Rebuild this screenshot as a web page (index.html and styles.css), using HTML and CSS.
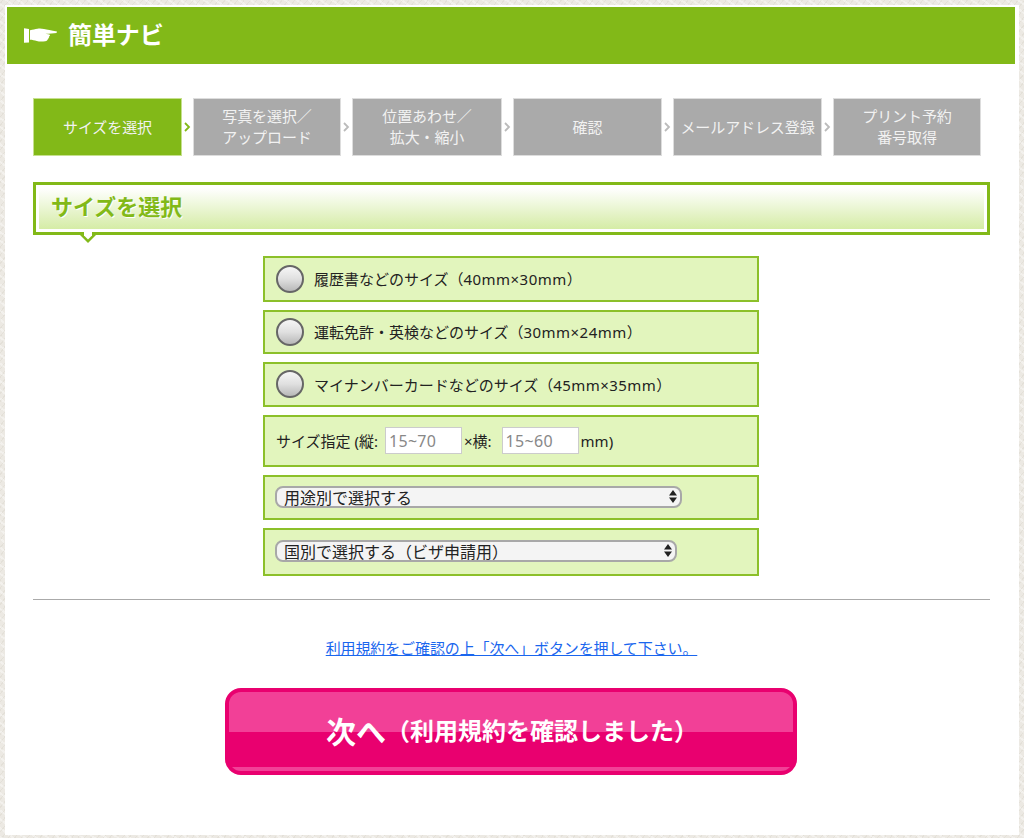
FILE: index.html
```html
<!DOCTYPE html>
<html lang="ja">
<head>
<meta charset="utf-8">
<title>簡単ナビ</title>
<link rel="stylesheet" href="styles.css">
</head>
<body>
<main class="panel">
  <header class="nav-head">
    <svg class="hand" viewBox="0 0 33 15" aria-hidden="true"><path d="M0 .3 5 1v13.4l-5 .3z"/><path d="M6 2.2c3-.6 5-1.2 7.5-1.5C16 .3 18 .6 20 1c3 .3 7 1.5 13 2.6l-.5 1.4c-3 .5-7 .6-11 .8 1.500.5 4 .6 4.500 1.200.3.6-.5 1.200-1 1.300.4.8.2 1.500-.6 1.800.2.900-.3 1.400-1.100 1.600-.1 1-.8 1.300-2 1.500-3 .5-6 .5-8.500-.2-2.300-.7-4.500-1.300-6.800-1.300z"/></svg>
    <h1 class="nav-title">簡単ナビ</h1>
  </header>
  <div class="content">
    <ol class="steps">
      <li class="step step-active step-w149">サイズを選択</li>
      <li class="sep"><svg class="chev chev-on" viewBox="0 0 7 10"><path d="M1 1l4 4-4 4"/></svg></li>
      <li class="step step-w148">写真を選択／<br>アップロード</li>
      <li class="sep"><svg class="chev" viewBox="0 0 7 10"><path d="M1 1l4 4-4 4"/></svg></li>
      <li class="step step-w150">位置あわせ／<br>拡大・縮小</li>
      <li class="sep"><svg class="chev" viewBox="0 0 7 10"><path d="M1 1l4 4-4 4"/></svg></li>
      <li class="step step-w149">確認</li>
      <li class="sep"><svg class="chev" viewBox="0 0 7 10"><path d="M1 1l4 4-4 4"/></svg></li>
      <li class="step step-w149">メールアドレス登録</li>
      <li class="sep"><svg class="chev" viewBox="0 0 7 10"><path d="M1 1l4 4-4 4"/></svg></li>
      <li class="step step-w148">プリント予約<br>番号取得</li>
    </ol>

    <div class="heading">
      <h2 class="heading-text">サイズを選択</h2>
      <svg class="notch" viewBox="0 0 16 11" aria-hidden="true"><path class="notch-g" d="M0 3h16l-8 8z"/><path class="notch-w" d="M4 0h8v3.500l-4 4-4-4z"/></svg>
    </div>

    <form class="options">
      <label class="row"><input class="radio" type="radio" name="size"><span>履歴書などのサイズ（<span class="dim">40mm×30mm</span>）</span></label>
      <label class="row"><input class="radio" type="radio" name="size"><span>運転免許・英検などのサイズ（<span class="dim">30mm×24mm</span>）</span></label>
      <label class="row"><input class="radio" type="radio" name="size"><span>マイナンバーカードなどのサイズ（<span class="dim">45mm×35mm</span>）</span></label>
      <div class="row row-custom">
        <span>サイズ指定 (縦:</span>
        <input class="num" type="text" placeholder="15~70">
        <span class="mid-label">×横:</span>
        <input class="num" type="text" placeholder="15~60">
        <span>mm)</span>
      </div>
      <div class="row row-select">
        <div class="select-wrap select-long">
          <select class="select"><option>用途別で選択する</option></select>
          <svg class="updown" viewBox="0 0 8 13" aria-hidden="true"><path d="M4 0l4 5.500H0zM4 13L0 7.500h8z"/></svg>
        </div>
      </div>
      <div class="row row-select">
        <div class="select-wrap select-short">
          <select class="select"><option>国別で選択する（ビザ申請用）</option></select>
          <svg class="updown" viewBox="0 0 8 13" aria-hidden="true"><path d="M4 0l4 5.500H0zM4 13L0 7.500h8z"/></svg>
        </div>
      </div>
    </form>

    <hr class="rule">

    <p class="terms"><a href="#">利用規約をご確認の上「次へ」ボタンを押して下さい。</a></p>

    <button class="next" type="button"><span class="next-main">次へ</span><span class="next-sub">（利用規約を確認しました）</span></button>
  </div>
</main>
</body>
</html>
```

FILE: styles.css
```css
* { box-sizing: border-box; }
html, body { margin: 0; padding: 0; }
body {
  width: 1024px;
  height: 838px;
  overflow: hidden;
  padding: 5px 5px 3px 5px;
  font-family: "Noto Sans CJK JP", "Noto Sans", sans-serif;
  text-spacing-trim: space-all;
  color: #222;
  background-color: #ece9e3;
  background-image:
    repeating-linear-gradient(37deg, rgba(255,255,255,.35) 0 2px, transparent 2px 7px),
    repeating-linear-gradient(-52deg, rgba(190,185,170,.18) 0 1px, transparent 1px 5px);
}
.panel {
  width: 1014px;
  height: 830px;
  background: #fff;
  padding-top: 2px;
}
.nav-head {
  display: flex;
  align-items: center;
  gap: 11px;
  width: 1008px;
  height: 57px;
  margin-left: 2px;
  padding-left: 17px;
  background: #82b918;
}
.hand { width: 33px; height: 15px; fill: #fff; flex: none; margin-top: -1px; }
.nav-title { margin: 0; padding-bottom: 3px; font-size: 24px; line-height: 1; font-weight: 700; color: #fff; letter-spacing: -.1px; }
.content { padding: 34px 0 0 28px; }

.steps { display: flex; margin: 0; padding: 0; list-style: none; height: 58px; }
.step {
  display: flex;
  align-items: center;
  justify-content: center;
  padding-bottom: 2px;
  text-align: center;
  font-size: 15px;
  line-height: 21px;
  letter-spacing: -.1px;
  color: #f2f2f2;
  background: #aaa;
  border: 1px solid #ddd;
}
.step-active { background: #82b918; border-color: #c6e08e; }
.step-w148 { width: 148px; }
.step-w149 { width: 149px; }
.step-w150 { width: 150px; }
.sep { width: 11px; display: flex; align-items: center; justify-content: center; }
.chev { width: 7px; height: 10px; fill: none; stroke: #bbb; stroke-width: 1.800; }
.chev-on { stroke: #82b918; }

.heading {
  position: relative;
  width: 957px;
  height: 53px;
  margin-top: 26px;
  border: 3px solid #82b918;
  padding: 3px;
  background: #fff;
}
.heading-text {
  margin: 0;
  height: 100%;
  padding-left: 12px;
  font-size: 22px;
  line-height: 35px;
  font-weight: 700;
  color: #82b918;
  text-shadow: 1px 1px 0 #fff;
  background: linear-gradient(#fff, #d5eca6);
}
.notch { position: absolute; left: 44px; bottom: -11px; width: 16px; height: 11px; overflow: visible; }
.notch-g { fill: #82b918; }
.notch-w { fill: #fff; }

.options {
  display: grid;
  grid-template-rows: 46px 44px 45px 52px 45px 48px;
  row-gap: 8px;
  width: 496px;
  margin: 21px 0 0 230px;
}
.row {
  display: flex;
  align-items: center;
  padding: 0 0 1px 11px;
  font-family: "Noto Sans", "Noto Sans CJK JP", sans-serif;
  font-size: 15px;
  background: #e2f5bd;
  border: 2px solid #8cc02a;
}
.dim { letter-spacing: .45px; }
.radio {
  appearance: none;
  width: 28px;
  height: 28px;
  margin: 0 10px 0 0;
  border: 2px solid #666;
  border-radius: 50%;
  background: linear-gradient(#f6f6f6, #e0e0e0 50%, #b8b8b8);
  flex: none;
}
.num {
  width: 77px;
  height: 27px;
  margin: 0 2px 0 7px;
  padding: 0 0 0 3px;
  font: 16px "Noto Sans", "Noto Sans CJK JP", sans-serif;
  letter-spacing: .3px;
  background: #fff;
  border: 1px solid #ccc;
}
.num::placeholder { color: #888; opacity: 1; }
.mid-label { padding-right: 3px; }
.row-select { padding-left: 10px; }
.select-wrap { position: relative; height: 22px; }
.select-long { width: 407px; }
.select-short { width: 402px; margin-bottom: 2px; }
.select {
  appearance: none;
  display: block;
  width: 100%;
  height: 100%;
  padding: 0 0 0 7px;
  font: 16px/18px "Noto Sans CJK JP", sans-serif;
  color: #222;
  background: #f4f4f4;
  border: 2px solid #a8a8a8;
  border-radius: 8px;
}
.updown { position: absolute; right: 5px; top: 4px; width: 8px; height: 13px; fill: #222; pointer-events: none; }

.rule { width: 957px; height: 1px; margin: 23px 0 0; border: 0; background: #aaa; }
.terms { width: 957px; margin: 37px 0 0; text-align: center; font-size: 15px; line-height: 22px; letter-spacing: -.12px; }
.terms a { color: #1a66ee; }

.next {
  display: flex;
  align-items: center;
  justify-content: center;
  width: 572px;
  height: 87px;
  margin: 29px 0 0 192px;
  padding: 0 0 3px 2px;
  color: #fff;
  font-family: inherit;
  font-weight: 700;
  border: 4px solid #e9006f;
  border-radius: 16px;
  background: linear-gradient(#f24097 0 40px, #e9006f 40px 75px, #f24097 75px 79px);
}
.next-main { font-size: 30px; line-height: 1; }
.next-sub { font-size: 24px; line-height: 1; }
```
